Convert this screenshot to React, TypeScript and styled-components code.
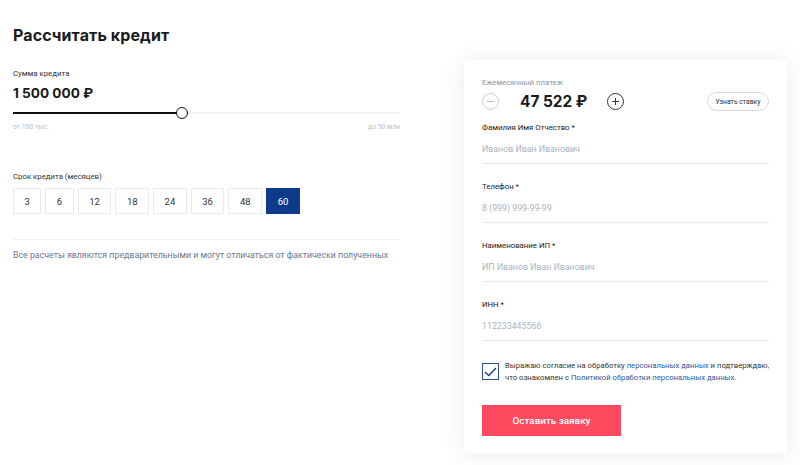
import { useState } from "react";
import styled, { createGlobalStyle } from "styled-components";

const terms = [3, 6, 12, 18, 24, 36, 48, 60];

const fields = [
  { label: "Фамилия Имя Отчество *", placeholder: "Иванов Иван Иванович" },
  { label: "Телефон *", placeholder: "8 (999) 999-99-99" },
  { label: "Наименование ИП *", placeholder: "ИП Иванов Иван Иванович" },
  { label: "ИНН *", placeholder: "112233445566" },
];

function App() {
  const [term, setTerm] = useState(60);
  const [agree, setAgree] = useState(true);
  const progress = 0.437;

  return (
    <>
      <GlobalStyle />
      <Page>
        <Calculator>
          <Title>Рассчитать кредит</Title>

          <SumLabel>Сумма кредита</SumLabel>
          <SumValue>1 500 000 ₽</SumValue>
          <Slider>
            <Track />
            <Filled style={{ width: `${progress * 100}%` }} />
            <Knob style={{ left: `${progress * 100}%` }} />
          </Slider>
          <Limits>
            <span>от 100 тыс.</span>
            <span>до 50 млн</span>
          </Limits>

          <TermLabel>Срок кредита (месяцев)</TermLabel>
          <Terms>
            {terms.map((t) => (
              <TermButton key={t} $active={t === term} onClick={() => setTerm(t)}>
                {t}
              </TermButton>
            ))}
          </Terms>

          <Divider />
          <Disclaimer>
            Все расчеты являются предварительными и могут отличаться от фактически полученных
          </Disclaimer>
        </Calculator>

        <Card>
          <PaymentLabel>Ежемесячный платеж</PaymentLabel>
          <PaymentRow>
            <RoundButton $muted aria-label="minus">
              <svg width="9" height="9" viewBox="0 0 9 9">
                <path d="M1 4.5h7" stroke="currentColor" strokeWidth="1" />
              </svg>
            </RoundButton>
            <Payment>47 522 ₽</Payment>
            <RoundButton aria-label="plus">
              <svg width="9" height="9" viewBox="0 0 9 9">
                <path d="M1 4.5h7M4.5 1v7" stroke="currentColor" strokeWidth="1" />
              </svg>
            </RoundButton>
            <RateButton>Узнать ставку</RateButton>
          </PaymentRow>

          <Fields>
            {fields.map((f) => (
              <Field key={f.label}>
                <FieldLabel>{f.label}</FieldLabel>
                <Input placeholder={f.placeholder} />
              </Field>
            ))}
          </Fields>

          <Consent>
            <Checkbox $checked={agree} onClick={() => setAgree(!agree)}>
              {agree && (
                <svg width="13" height="10" viewBox="0 0 13 10">
                  <path
                    d="M1 5l3.8 3.6L12 1"
                    fill="none"
                    stroke="#1f3f8f"
                    strokeWidth="1.4"
                  />
                </svg>
              )}
            </Checkbox>
            <ConsentText>
              Выражаю согласие на обработку <Link>персональных данных</Link> и подтверждаю,
              <br />
              что ознакомлен с <Link>Политикой обработки персональных данных</Link>.
            </ConsentText>
          </Consent>

          <Submit>Оставить заявку</Submit>
        </Card>
      </Page>
    </>
  );
}

const GlobalStyle = createGlobalStyle`
  body {
    margin: 0;
    background: #ffffff;
    font-family: Roboto, "Liberation Sans", sans-serif;
    color: #222;
  }
  * {
    box-sizing: border-box;
  }
`;

const Page = styled.div`
  display: flex;
  justify-content: space-between;
  align-items: flex-start;
  padding: 0 13px;
  width: 800px;
  height: 465px;
`;

const Calculator = styled.div`
  width: 387px;
  padding-top: 24px;
  display: flex;
  flex-direction: column;
`;

const Title = styled.h1`
  margin: 0;
  font-family: Inter, "Open Sans", sans-serif;
  font-weight: 700;
  font-size: 16px;
  line-height: 22px;
  color: #1a1a1a;
  letter-spacing: 0.1px;
`;

const SumLabel = styled.div`
  margin-top: 22px;
  font-size: 7.8px;
  line-height: 11px;
  color: #333;
`;

const SumValue = styled.div`
  margin-top: 5px;
  font-family: Inter, "Open Sans", sans-serif;
  font-weight: 700;
  font-size: 13.6px;
  line-height: 18px;
  color: #1a1a1a;
`;

const Slider = styled.div`
  position: relative;
  margin-top: 5px;
  height: 12px;
`;

const Track = styled.div`
  position: absolute;
  left: 0;
  right: 0;
  top: 5px;
  height: 2px;
  background: #eef2f8;
`;

const Filled = styled.div`
  position: absolute;
  left: 0;
  top: 5px;
  height: 2px;
  background: #111;
`;

const Knob = styled.div`
  position: absolute;
  top: 0;
  width: 12px;
  height: 12px;
  margin-left: -6px;
  border-radius: 50%;
  background: #fff;
  border: 1.5px solid #111;
`;

const Limits = styled.div`
  margin-top: 4px;
  display: flex;
  justify-content: space-between;
  font-size: 6.8px;
  line-height: 9px;
  color: #b7c0cc;
`;

const TermLabel = styled.div`
  margin-top: 39px;
  font-size: 7.8px;
  line-height: 11px;
  color: #333;
`;

const Terms = styled.div`
  margin-top: 6px;
  display: flex;
  gap: 4px;
`;

const TermButton = styled.button<{ $active?: boolean }>`
  height: 26px;
  min-width: 27px;
  padding: 0 10.5px;
  font-family: Roboto, "Liberation Sans", sans-serif;
  font-size: 9.5px;
  border: 1px solid ${(p) => (p.$active ? "#0e3a8c" : "#e8ebef")};
  background: ${(p) => (p.$active ? "#0e3a8c" : "#fff")};
  color: ${(p) => (p.$active ? "#fff" : "#333")};
  cursor: pointer;
`;

const Divider = styled.div`
  margin-top: 25px;
  height: 1px;
  background: #eceff3;
`;

const Disclaimer = styled.p`
  margin: 8px 0 0;
  font-size: 8.8px;
  line-height: 14px;
  color: #6b7890;
  white-space: nowrap;
`;

const Card = styled.div`
  margin-top: 60px;
  width: 323px;
  padding: 17px 18px 17px;
  background: #fff;
  box-shadow: 0 2px 22px rgba(40, 70, 120, 0.11);
  display: flex;
  flex-direction: column;
`;

const PaymentLabel = styled.div`
  font-size: 7.8px;
  line-height: 11px;
  color: #8a94a3;
`;

const PaymentRow = styled.div`
  margin-top: 4px;
  display: flex;
  align-items: center;
  height: 19px;
`;

const RoundButton = styled.button<{ $muted?: boolean }>`
  width: 17px;
  height: 17px;
  padding: 0;
  border-radius: 50%;
  border: 1px solid ${(p) => (p.$muted ? "#c9cdd3" : "#333")};
  color: ${(p) => (p.$muted ? "#b8bdc4" : "#333")};
  background: #fff;
  display: flex;
  align-items: center;
  justify-content: center;
  cursor: pointer;
`;

const Payment = styled.div`
  margin: 0 20px 0 21px;
  font-family: Inter, "Open Sans", sans-serif;
  font-weight: 700;
  font-size: 15.4px;
  line-height: 19px;
  color: #1a1a1a;
`;

const RateButton = styled.button`
  margin-left: auto;
  height: 19px;
  width: 62px;
  padding: 0;
  border-radius: 10px;
  border: 1px solid #d6dae0;
  background: #fff;
  font-family: Roboto, "Liberation Sans", sans-serif;
  font-size: 6.8px;
  color: #333;
  cursor: pointer;
`;

const Fields = styled.div`
  margin-top: 11px;
  display: flex;
  flex-direction: column;
  gap: 17px;
`;

const Field = styled.label`
  display: flex;
  flex-direction: column;
`;

const FieldLabel = styled.span`
  font-size: 7.8px;
  line-height: 12px;
  color: #222;
`;

const Input = styled.input`
  height: 30px;
  padding: 0;
  border: none;
  border-bottom: 1px solid #e3e7ee;
  outline: none;
  font-family: Roboto, "Liberation Sans", sans-serif;
  font-size: 8.8px;
  color: #222;
  background: transparent;

  &::placeholder {
    color: #a9b4c4;
  }
`;

const Consent = styled.div`
  margin-top: 22px;
  display: flex;
  align-items: flex-start;
  gap: 6px;
`;

const Checkbox = styled.div<{ $checked?: boolean }>`
  flex: none;
  width: 17px;
  height: 17px;
  border: 1px solid #2b4f9b;
  display: flex;
  align-items: center;
  justify-content: center;
  cursor: pointer;
`;

const ConsentText = styled.div`
  margin-top: -3px;
  font-size: 7.7px;
  line-height: 12px;
  color: #333;
  white-space: nowrap;
`;

const Link = styled.a`
  color: #2c57a5;
  text-decoration: none;
  cursor: pointer;
`;

const Submit = styled.button`
  margin-top: 21px;
  width: 139px;
  height: 31px;
  border: none;
  background: #fe4a5f;
  color: #fff;
  font-family: Roboto, "Liberation Sans", sans-serif;
  font-weight: 500;
  font-size: 9.9px;
  cursor: pointer;
`;

export default App;
